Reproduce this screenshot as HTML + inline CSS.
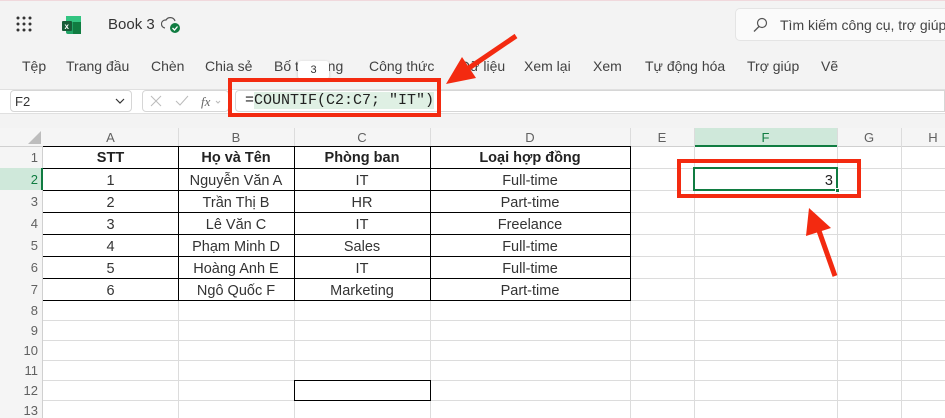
<!DOCTYPE html>
<html><head><meta charset="utf-8"><style>
*{margin:0;padding:0;box-sizing:border-box}
body{width:945px;height:418px;overflow:hidden;background:#f3f3f3;font-family:"Liberation Sans",sans-serif;position:relative;color:#242424}
.a{position:absolute}
.tab{position:absolute;top:58px;font-size:14px;color:#424242}
.grid{position:absolute;left:0;top:128px;width:945px;height:290px;background:#fff}
.vl{position:absolute;width:1px;background:#dcdcdc}
.hl{position:absolute;height:1px;background:#dcdcdc}
.ch{position:absolute;top:128px;height:19px;font-size:13px;color:#616161;text-align:center;line-height:19px}
.rh{position:absolute;left:0;width:41px;text-align:right;font-size:13px;color:#616161;padding-right:3px}
.c{position:absolute;text-align:center;font-size:14.5px;color:#333}
.b{font-weight:bold;color:#222}
</style></head><body>
<div class="a" style="left:0;top:0;width:945px;height:1px;background:#f0d8dc"></div>
<svg class="a" style="left:16px;top:16px" width="16" height="16"><g fill="#333"><circle cx="2" cy="2" r="1.5"/><circle cx="8" cy="2" r="1.5"/><circle cx="14" cy="2" r="1.5"/><circle cx="2" cy="8" r="1.5"/><circle cx="8" cy="8" r="1.5"/><circle cx="14" cy="8" r="1.5"/><circle cx="2" cy="14" r="1.5"/><circle cx="8" cy="14" r="1.5"/><circle cx="14" cy="14" r="1.5"/></g></svg>
<svg class="a" style="left:62px;top:15px" width="20" height="20"><rect x="4" y="1" width="15" height="18" rx="2" fill="#21a366"/><rect x="4" y="1" width="15" height="6" fill="#33c481"/><rect x="11" y="7" width="8" height="12" fill="#107c41"/><rect x="0" y="6" width="10" height="10" rx="1" fill="#185c37"/><text x="2.5" y="14" font-size="8" fill="#fff" font-family="Liberation Sans" font-weight="bold">x</text></svg>
<div class="a" style="left:108px;top:16px;font-size:15px;color:#333">Book 3</div>
<svg class="a" style="left:161px;top:15px" width="20" height="20"><path d="M4 13a4 4 0 0 1 1-8 5 5 0 0 1 9 1" fill="none" stroke="#555" stroke-width="1.2"/><circle cx="14" cy="13" r="5" fill="#107c41"/><path d="M11.5 13l2 2 3-3.5" stroke="#fff" fill="none" stroke-width="1.3"/></svg>
<div class="a" style="left:735px;top:8px;width:215px;height:33px;background:#fafafa;border:1px solid #e4e4e4;border-radius:5px"></div>
<svg class="a" style="left:752px;top:17px" width="16" height="16"><circle cx="10" cy="6" r="4.5" fill="none" stroke="#555" stroke-width="1.2"/><path d="M7 9.5L2 14.5" stroke="#555" stroke-width="1.3"/></svg>
<div class="a" style="left:780px;top:17px;font-size:14px;color:#444;white-space:nowrap">Tìm kiếm công cụ, trợ giúp</div>
<div class="tab" style="left:22px">Tệp</div>
<div class="tab" style="left:66px">Trang đầu</div>
<div class="tab" style="left:151px">Chèn</div>
<div class="tab" style="left:205px">Chia sẻ</div>
<div class="tab" style="left:274px">Bố trí trang</div>
<div class="tab" style="left:369px">Công thức</div>
<div class="tab" style="left:460px">Dữ liệu</div>
<div class="tab" style="left:524px">Xem lại</div>
<div class="tab" style="left:593px">Xem</div>
<div class="tab" style="left:645px">Tự động hóa</div>
<div class="tab" style="left:747px">Trợ giúp</div>
<div class="tab" style="left:821px">Vẽ</div>
<div class="a" style="left:0;top:89px;width:945px;height:1px;background:#e0e0e0"></div>
<div class="a" style="left:0;top:90px;width:945px;height:23px;background:#fff"></div>
<div class="a" style="left:0;top:113px;width:945px;height:1px;background:#e0e0e0"></div>
<div class="a" style="left:298px;top:61px;width:31px;height:18px;background:#fff;border-radius:3px;box-shadow:0 1px 3px rgba(0,0,0,.2);font-size:11px;text-align:center;line-height:18px;color:#333">3</div>
<div class="a" style="left:10px;top:90px;width:122px;height:22px;background:#fff;border:1px solid #d6d6d6;border-radius:4px;font-size:13px;padding:3px 4px;color:#333">F2</div>
<svg class="a" style="left:114px;top:97px" width="12" height="8"><path d="M2 2l4 4 4-4" fill="none" stroke="#333" stroke-width="1.2"/></svg>
<div class="a" style="left:142px;top:90px;width:87px;height:22px;background:#fff;border:1px solid #d6d6d6;border-radius:4px"></div>
<svg class="a" style="left:148px;top:93px" width="80" height="16"><path d="M3 3l10 10M13 3L3 13" stroke="#bbb" stroke-width="1"/><path d="M28 8l4 4 8-9" fill="none" stroke="#bbb" stroke-width="1"/><text x="53" y="13" font-size="13" font-style="italic" fill="#666" font-family="Liberation Serif">fx</text><path d="M68 8l2 2 2-2" stroke="#bbb" fill="none"/></svg>
<div class="a" style="left:235px;top:90px;width:710px;height:22px;background:#fff;border:1px solid #d6d6d6;border-radius:4px 0 0 4px"></div>
<div class="a" style="left:245px;top:92px;font-family:'Liberation Mono',monospace;font-size:15px;color:#222">=<span style="background:#dff0e4">COUNTIF(C2:C7; "IT")</span></div>
<div class="a" style="left:228px;top:78px;width:213px;height:39px;border:4px solid #f32a10"></div>

<div class="grid"></div>
<div class="a" style="left:0;top:128px;width:945px;height:19px;background:#f5f5f5;border-bottom:1px solid #d0d0d0"></div>
<div class="a" style="left:0;top:147px;width:43px;height:271px;background:#f5f5f5;border-right:1px solid #d0d0d0"></div>
<svg class="a" style="left:28px;top:131px" width="13" height="13"><path d="M13 0L13 13L0 13Z" fill="#bdbdbd"/></svg>
<div class="a" style="left:694px;top:128px;width:143px;height:19px;background:#cfe8da;border-bottom:2px solid #107c41"></div>
<div class="a" style="left:0;top:168px;width:43px;height:22px;background:#cfe8da;border-right:2px solid #107c41"></div>
<div class="vl" style="left:178px;top:128px;height:290px"></div>
<div class="vl" style="left:294px;top:128px;height:290px"></div>
<div class="vl" style="left:430px;top:128px;height:290px"></div>
<div class="vl" style="left:630px;top:128px;height:290px"></div>
<div class="vl" style="left:694px;top:128px;height:290px"></div>
<div class="vl" style="left:837px;top:128px;height:290px"></div>
<div class="vl" style="left:901px;top:128px;height:290px"></div>
<div class="hl" style="left:43px;top:168px;width:902px"></div>
<div class="hl" style="left:43px;top:190px;width:902px"></div>
<div class="hl" style="left:43px;top:212px;width:902px"></div>
<div class="hl" style="left:43px;top:234px;width:902px"></div>
<div class="hl" style="left:43px;top:256px;width:902px"></div>
<div class="hl" style="left:43px;top:278px;width:902px"></div>
<div class="hl" style="left:43px;top:300px;width:902px"></div>
<div class="hl" style="left:43px;top:320px;width:902px"></div>
<div class="hl" style="left:43px;top:340px;width:902px"></div>
<div class="hl" style="left:43px;top:360px;width:902px"></div>
<div class="hl" style="left:43px;top:380px;width:902px"></div>
<div class="hl" style="left:43px;top:400px;width:902px"></div>
<div class="ch" style="left:43px;width:135px">A</div>
<div class="ch" style="left:178px;width:116px">B</div>
<div class="ch" style="left:294px;width:136px">C</div>
<div class="ch" style="left:430px;width:200px">D</div>
<div class="ch" style="left:630px;width:64px">E</div>
<div class="ch" style="left:694px;width:143px;color:#107c41">F</div>
<div class="ch" style="left:837px;width:64px">G</div>
<div class="ch" style="left:901px;width:64px">H</div>
<div class="rh" style="top:150px">1</div><div class="rh" style="top:172px;color:#107c41">2</div><div class="rh" style="top:194px">3</div><div class="rh" style="top:216px">4</div><div class="rh" style="top:238px">5</div><div class="rh" style="top:260px">6</div><div class="rh" style="top:282px">7</div><div class="rh" style="top:303px">8</div><div class="rh" style="top:323px">9</div><div class="rh" style="top:343px">10</div><div class="rh" style="top:363px">11</div><div class="rh" style="top:383px">12</div><div class="rh" style="top:403px">13</div>
<div class="a" style="left:43px;top:146px;width:588px;height:155px;border:1px solid #000;border-left:none"></div>
<div class="a" style="left:178px;top:146px;width:1px;height:155px;background:#000"></div>
<div class="a" style="left:294px;top:146px;width:1px;height:155px;background:#000"></div>
<div class="a" style="left:430px;top:146px;width:1px;height:155px;background:#000"></div>
<div class="a" style="left:43px;top:168px;width:588px;height:1px;background:#000"></div>
<div class="a" style="left:43px;top:190px;width:588px;height:1px;background:#000"></div>
<div class="a" style="left:43px;top:212px;width:588px;height:1px;background:#000"></div>
<div class="a" style="left:43px;top:234px;width:588px;height:1px;background:#000"></div>
<div class="a" style="left:43px;top:256px;width:588px;height:1px;background:#000"></div>
<div class="a" style="left:43px;top:278px;width:588px;height:1px;background:#000"></div>
<div class="a" style="left:294px;top:380px;width:137px;height:21px;border:1px solid #000"></div>
<div class="c b" style="left:43px;width:135px;top:150px">STT</div>
<div class="c b" style="left:178px;width:116px;top:150px">Họ và Tên</div>
<div class="c b" style="left:294px;width:136px;top:150px">Phòng ban</div>
<div class="c b" style="left:430px;width:200px;top:150px">Loại hợp đồng</div>
<div class="c" style="left:43px;width:135px;top:173px">1</div><div class="c" style="left:178px;width:116px;top:173px">Nguyễn Văn A</div><div class="c" style="left:294px;width:136px;top:173px">IT</div><div class="c" style="left:430px;width:200px;top:173px">Full-time</div>
<div class="c" style="left:43px;width:135px;top:195px">2</div><div class="c" style="left:178px;width:116px;top:195px">Trần Thị B</div><div class="c" style="left:294px;width:136px;top:195px">HR</div><div class="c" style="left:430px;width:200px;top:195px">Part-time</div>
<div class="c" style="left:43px;width:135px;top:217px">3</div><div class="c" style="left:178px;width:116px;top:217px">Lê Văn C</div><div class="c" style="left:294px;width:136px;top:217px">IT</div><div class="c" style="left:430px;width:200px;top:217px">Freelance</div>
<div class="c" style="left:43px;width:135px;top:239px">4</div><div class="c" style="left:178px;width:116px;top:239px">Phạm Minh D</div><div class="c" style="left:294px;width:136px;top:239px">Sales</div><div class="c" style="left:430px;width:200px;top:239px">Full-time</div>
<div class="c" style="left:43px;width:135px;top:261px">5</div><div class="c" style="left:178px;width:116px;top:261px">Hoàng Anh E</div><div class="c" style="left:294px;width:136px;top:261px">IT</div><div class="c" style="left:430px;width:200px;top:261px">Full-time</div>
<div class="c" style="left:43px;width:135px;top:283px">6</div><div class="c" style="left:178px;width:116px;top:283px">Ngô Quốc F</div><div class="c" style="left:294px;width:136px;top:283px">Marketing</div><div class="c" style="left:430px;width:200px;top:283px">Part-time</div>
<div class="a" style="left:693px;top:167px;width:145px;height:24px;border:2px solid #107c41"></div>
<div class="a" style="left:835px;top:188px;width:5px;height:5px;background:#107c41;border:1px solid #fff"></div>
<div class="a" style="left:780px;top:173px;width:53px;text-align:right;font-size:14.5px;color:#222">3</div>
<div class="a" style="left:677px;top:159px;width:184px;height:39px;border:4px solid #f32a10"></div>
<svg class="a" style="left:0;top:0" width="945" height="418">
<path d="M516 36L466 70" stroke="#f32a10" stroke-width="5"/>
<path d="M446 84L462 57L476 78Z" fill="#f32a10"/>
<path d="M835 276L818 228" stroke="#f32a10" stroke-width="5"/>
<path d="M809 208L806 236L831 228Z" fill="#f32a10"/>
</svg>
</body></html>
